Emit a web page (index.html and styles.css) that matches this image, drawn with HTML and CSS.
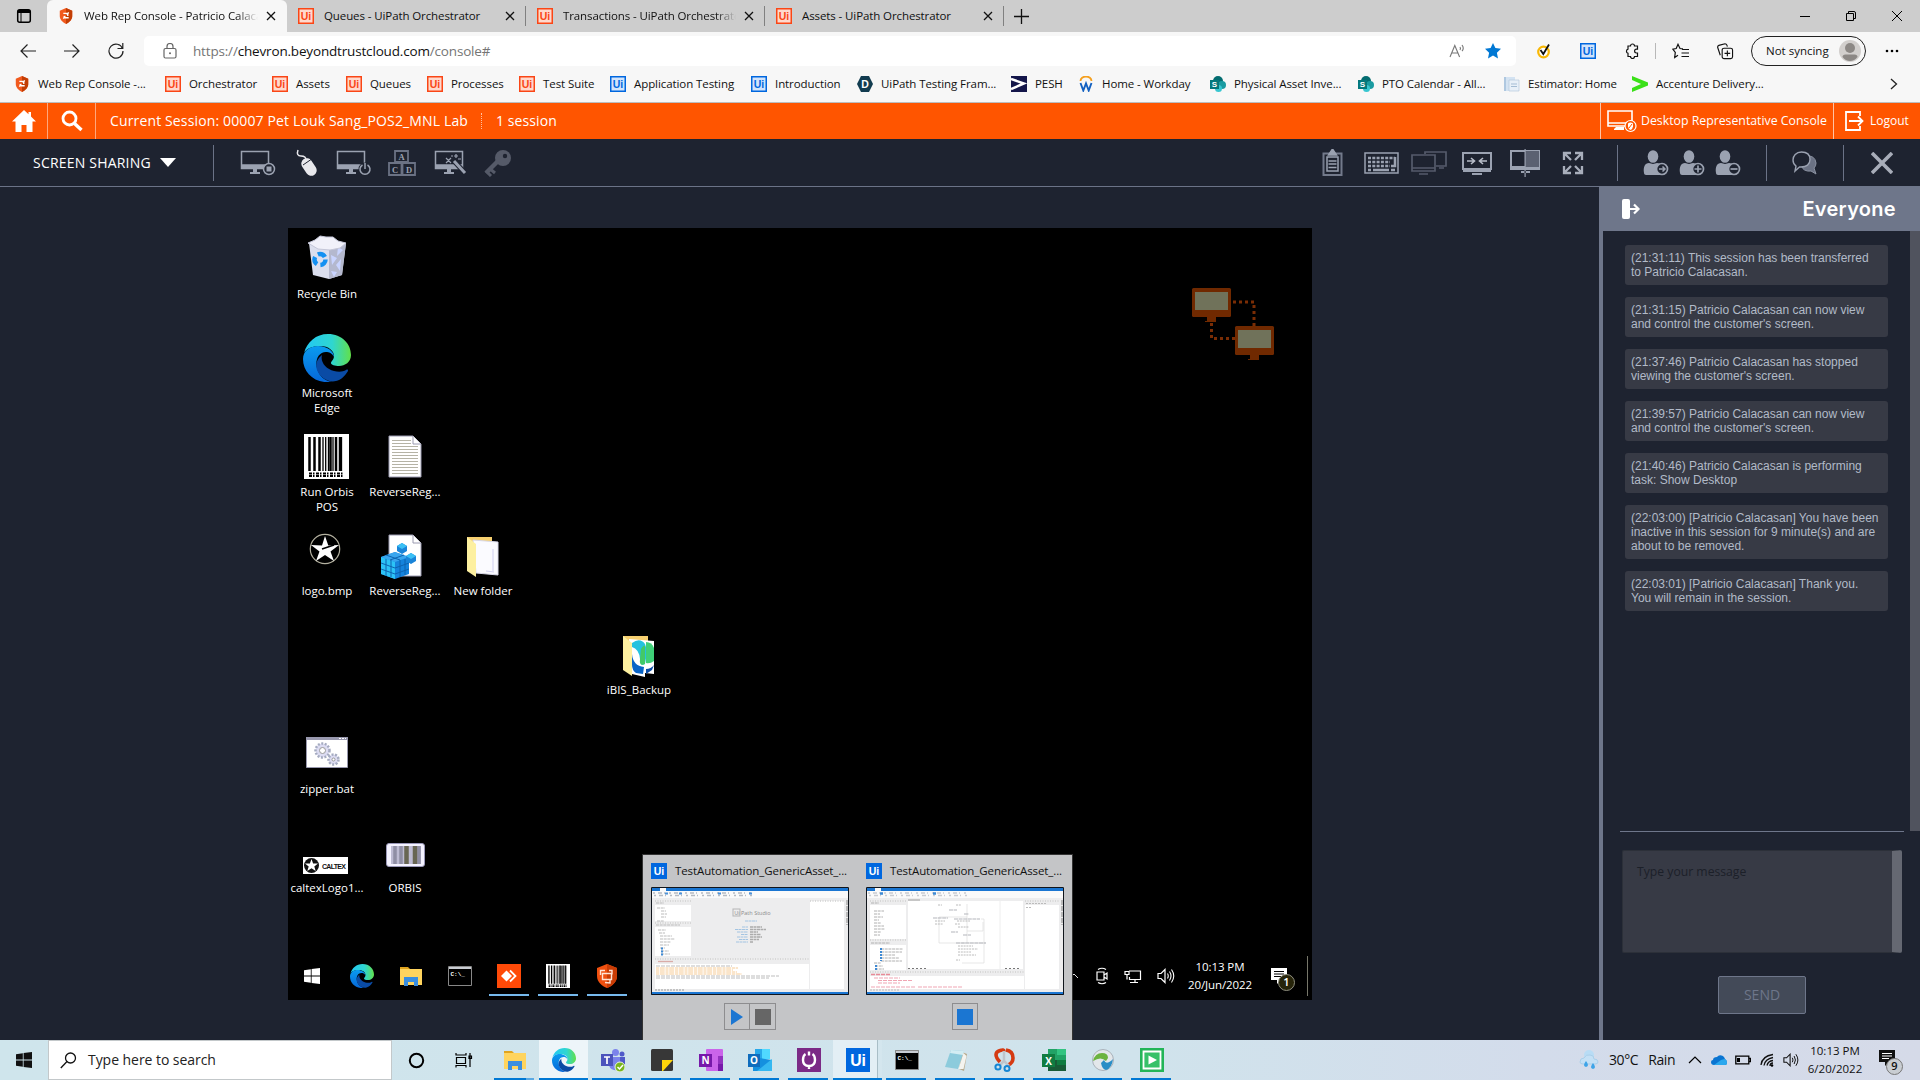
FILE: index.html
```html
<!DOCTYPE html>
<html lang="en">
<head>
<meta charset="utf-8">
<title>Web Rep Console</title>
<link rel="stylesheet" href="styles.css">
</head>
<body>
<svg class="paints" width="0" height="0">
  <defs>
    <linearGradient id="gTop" x1="0" y1="0" x2="1" y2="0"><stop offset="0" stop-color="#22c8f5"/><stop offset=".6" stop-color="#2fd6d0"/><stop offset="1" stop-color="#62e04a"/></linearGradient>
    <linearGradient id="gLeft" x1="0" y1="0" x2="0" y2="1"><stop offset="0" stop-color="#0a9bf0"/><stop offset="1" stop-color="#0667d8"/></linearGradient>
  </defs>
</svg>
<svg class="sprite">
  <symbol id="edge" viewBox="0 0 48 48">
    <path fill="url(#gTop)" d="M1 19C4 8 13 0 25 0c14 0 23 10 23 21 0 7-6 11-12 11-4 0-8-1-8-3s3-3 3-7c0-5-5-10-14-10C9 12 3 15 1 19z"/>
    <path fill="url(#gLeft)" d="M0 25c0-8 7-13 15-13 9 0 16 5 16 11-2-4-5-5-8-5-8 0-11 9-9 16 2 8 8 13 15 14C12 50 0 39 0 25z"/>
    <path fill="#0a4ba5" d="M19 21c-5 4-7 9-5 15 3 8 12 13 19 11 5-1 9-5 12-10 0-1 0-2-2-1-3 2-8 2-12 1-8-2-14-9-12-16z"/>
  </symbol>
  <symbol id="ui" viewBox="0 0 16 16"><rect x=".7" y=".7" width="14.6" height="14.6" fill="#ffd9cd" stroke="#fa4616" stroke-width="1.6"/><text x="8" y="12" text-anchor="middle" class="logo-text red">Ui</text></symbol>
  <symbol id="uib" viewBox="0 0 16 16"><rect x=".7" y=".7" width="14.6" height="14.6" fill="#d2e4fb" stroke="#0067df" stroke-width="1.6"/><text x="8" y="12" text-anchor="middle" class="logo-text blue">Ui</text></symbol>
  <symbol id="uis" viewBox="0 0 16 16"><rect width="16" height="16" fill="#0067df"/><text x="8" y="12" text-anchor="middle" class="logo-text white">Ui</text></symbol>
  <symbol id="shield" viewBox="0 0 16 18"><path fill="#f15a1e" d="M8 0l7 3v6c0 4-3 7-7 9-4-2-7-5-7-9V3z"/><path fill="#c23e05" d="M8 0l7 3v6c0 4-3 7-7 9z"/><path d="M5 6h5v3M11 11H6V9M5 12l2-3M11 5l-2 3" stroke="#fff" stroke-width="1.5" fill="none"/></symbol>
  <symbol id="x" viewBox="0 0 10 10"><path d="M1 1l8 8M9 1L1 9" stroke="currentColor" stroke-width="1.3"/></symbol>
  <symbol id="sp" viewBox="0 0 16 16"><circle cx="8" cy="5" r="5" fill="#036c70"/><circle cx="12" cy="9" r="4" fill="#1a9ba1"/><circle cx="8.500" cy="12.500" r="3.500" fill="#37c6d0"/><rect y="4" width="9" height="9" fill="#03787c"/><text x="4.500" y="11.200" text-anchor="middle" class="logo-s">S</text></symbol>
  <symbol id="mon" viewBox="0 0 36 28"><path d="M1.500 2.500h27v17h-27zM1.500 16h27" fill="none" stroke="currentColor" stroke-width="1.500"/><path d="M2 16h26v3H2zM13 20h4v3h3v2H10v-2h3z" fill="currentColor"/></symbol>
  <symbol id="person" viewBox="0 0 26 26"><ellipse cx="10" cy="6.500" rx="5.300" ry="6.300" fill="#9ba2b1"/><path d="M1 23c-1-6 1-10 5-10l4 1 4-1c4 0 5 3 5 8v4H3c-1 0-2-1-2-2z" fill="#9ba2b1"/><circle cx="19" cy="19" r="5.500" fill="#1e2330" stroke="#9ba2b1" stroke-width="1.700"/></symbol>
  <symbol id="folder" viewBox="0 0 24 24"><path fill="#e0a41f" d="M1 3h8l2 2H1z"/><path fill="#ffd45e" d="M1 5h22v16H1z"/><path fill="#3a8ee0" d="M5 13h14v9h-4v-4H9v4H5z"/></symbol>
  <symbol id="barcode" viewBox="0 0 45 45"><path fill="#fff" d="M0 0h45v45H0z"/><path d="M5.500 3v34M10.500 3v34M15.500 3v34M26.500 3v34M32 3v34M36 3v34" stroke="#000" stroke-width="2.500"/><path d="M19 3v34M21.700 3v34M24.500 3v34M29 3v34M37.500 3v34" stroke="#000" stroke-width="1.300"/><path d="M5 39.500h34M5 42h34" stroke="#000" stroke-width="2" stroke-dasharray="3 1 1.500 1.500"/></symbol>
  <symbol id="cmd" viewBox="0 0 24 20"><path fill="#000" stroke="#888" stroke-width="1" d="M.5.500h23v19H.5z"/><path fill="#c8ccd2" d="M1 1h22v2H1z"/><text x="2.500" y="9.500" class="cmd-text">C:\_</text></symbol>
  <symbol id="vol" viewBox="0 0 18 16"><path d="M1 5.500h3l4-4v13l-4-4H1z" fill="none" stroke="currentColor" stroke-width="1.200"/><path d="M10.500 5.500q1.500 2.500 0 5M12.500 3.500q3 4.500 0 9M14.500 1.500q4.500 6.500 0 13" fill="none" stroke="currentColor" stroke-width="1.100"/></symbol>
  <symbol id="note" viewBox="0 0 18 18"><path fill="currentColor" d="M1 1h16v12h-6l-4 4v-4H1z"/></symbol>
  <symbol id="win" viewBox="0 0 16 16"><path fill="currentColor" d="M0 2.200L6.800 1.200v6.300H0zM7.600 1.100L16 0v7.500H7.600zM0 8.400h6.800v6.400L0 13.800zM7.600 8.400H16V16l-8.400-1.100z"/></symbol>
</svg>

<header class="tabstrip">
  <div class="tab-menu"><svg width="16" height="16" viewBox="0 0 16 16"><rect x="1.700" y="1.700" width="12.600" height="12.600" rx="2" fill="none" stroke="#000" stroke-width="1.500"/><path d="M2 2h12v2H2z" fill="#000"/><path d="M5 2v12M2 4.500h12" stroke="#000"/></svg></div>
  <div class="tab tab-active"><svg class="fav"><use href="#shield"/></svg><span>Web Rep Console - Patricio Calacasan</span><svg class="close"><use href="#x"/></svg></div>
  <div class="tab"><svg class="fav"><use href="#ui"/></svg><span>Queues - UiPath Orchestrator</span><svg class="close"><use href="#x"/></svg></div>
  <div class="tab fade"><svg class="fav"><use href="#ui"/></svg><span>Transactions - UiPath Orchestrator</span><svg class="close"><use href="#x"/></svg></div>
  <div class="tab"><svg class="fav"><use href="#ui"/></svg><span>Assets - UiPath Orchestrator</span><svg class="close"><use href="#x"/></svg></div>
  <svg class="plus" viewBox="0 0 15 15"><path d="M7.500 0v15M0 7.500h15" stroke="#111" stroke-width="1.300"/></svg>
  <div class="winctl">
    <svg viewBox="0 0 12 12"><path d="M1 6.500h10" stroke="#000"/></svg>
    <svg viewBox="0 0 12 12"><path d="M1.500 3.500h7v7h-7z M3.500 3V1.500H9q1.500 0 1.500 1.500v5.500H9" fill="none" stroke="#000"/></svg>
    <svg viewBox="0 0 12 12"><path d="M1 1l10 10M11 1L1 11" stroke="#000"/></svg>
  </div>
</header>

<div class="navbar">
  <svg class="nav" viewBox="0 0 16 16"><path d="M16 8H1M7.500 1.500L1 8l6.500 6.500" fill="none" stroke="#222" stroke-width="1.200"/></svg>
  <svg class="nav" viewBox="0 0 16 16"><path d="M0 8h15M8.500 1.500L15 8l-6.500 6.500" fill="none" stroke="#222" stroke-width="1.200"/></svg>
  <svg class="nav" viewBox="0 0 16 16"><path d="M14.500 5.500A7 7 0 1 0 15 8M14.800 0v5.500H9.500" fill="none" stroke="#222" stroke-width="1.200"/></svg>
  <div class="address">
    <svg class="lock" viewBox="0 0 14 16"><rect x="1" y="5.500" width="12" height="9.500" rx="1.500" fill="none" stroke="#666" stroke-width="1.200"/><path d="M4 5.500V3.500a3 3 0 0 1 6 0v2" fill="none" stroke="#666" stroke-width="1.200"/><circle cx="7" cy="10.300" r="1" fill="#666"/></svg>
    <span class="url"><i>https://</i>chevron.beyondtrustcloud.com<i>/console#</i></span>
    <svg class="read" viewBox="0 0 18 16"><path d="M1 14L5.800 2.500 10.600 14M2.700 10h6.200M11 4q1 1.500 0 3M13 2q2.500 3.500 0 6" fill="none" stroke="#777" stroke-width="1.100"/></svg>
    <svg class="star" viewBox="0 0 16 16"><path fill="#0078d4" d="M8 0l2.400 5.100 5.600.7-4.100 3.900L13 15.400 8 12.600 3 15.400l1.100-5.700L0 5.800l5.600-.7z"/></svg>
  </div>
  <div class="ext">
    <svg viewBox="0 0 16 16"><circle cx="7.500" cy="9" r="5.300" fill="#fff" stroke="#f9b806" stroke-width="2.200"/><path d="M4.500 7l2.800 4L13 1.500" fill="none" stroke="#111" stroke-width="1.800"/></svg>
    <svg viewBox="0 0 16 16"><use href="#uib"/></svg>
    <svg viewBox="0 0 16 16"><path d="M4 3h2.500a2 2 0 0 1 4 0H13.500v3.200h-1a1.800 1.800 0 0 0 0 3.800h1V13.500h-3a2 2 0 0 1-4 0H4v-3.200a2.200 2.200 0 0 1 0-4.200z" fill="none" stroke="#111" stroke-width="1.200"/></svg>
  </div>
  <div class="ext ext2">
    <svg viewBox="0 0 18 16"><path d="M11 5.300L8 5 6 .8 4.200 5 .8 5.600l2.500 3.300L2.700 14 6 11.800M10 6h7M9.500 9.500H17M9.500 13H17" fill="none" stroke="#111" stroke-width="1.200"/></svg>
    <svg viewBox="0 0 18 18"><rect x="6" y="5.500" width="11" height="11" rx="2" fill="none" stroke="#111" stroke-width="1.200"/><path d="M11.500 8v6M8.500 11h6M4 13L1.200 4.500Q1 3 2.500 2.500L9 .8q1.500 0 2 1.500l.5 1.500" fill="none" stroke="#111" stroke-width="1.200"/></svg>
  </div>
  <div class="profile"><span>Not syncing</span><svg viewBox="0 0 22 22"><circle cx="11" cy="11" r="11" fill="#d2cfcd"/><circle cx="11" cy="8" r="5" fill="#8c8885"/><path d="M3.500 17q0-2.500 3-2.500h9q3 0 3 2.500-3 4-7.500 4t-7.500-4z" fill="#8c8885"/></svg></div>
  <svg class="dots" viewBox="0 0 14 4"><circle cx="2" cy="2" r="1.300"/><circle cx="7" cy="2" r="1.300"/><circle cx="12" cy="2" r="1.300"/></svg>
</div>

<nav class="bookmarks">
  <a><svg><use href="#shield"/></svg>Web Rep Console -...</a>
  <a><svg><use href="#ui"/></svg>Orchestrator</a>
  <a><svg><use href="#ui"/></svg>Assets</a>
  <a><svg><use href="#ui"/></svg>Queues</a>
  <a><svg><use href="#ui"/></svg>Processes</a>
  <a><svg><use href="#ui"/></svg>Test Suite</a>
  <a><svg><use href="#uib"/></svg>Application Testing</a>
  <a><svg><use href="#uib"/></svg>Introduction</a>
  <a><svg viewBox="0 0 16 16"><path fill="#123c50" d="M4 0h8l4 8-4 8H4L0 8z"/><text x="8" y="12" text-anchor="middle" class="logo-text white">D</text></svg>UiPath Testing Fram...</a>
  <a><svg viewBox="0 0 16 16"><path fill="#14164a" d="M0 0h16v16H0z"/><path d="M0 3l13 4.500L0 13" fill="none" stroke="#fff" stroke-width="2.500"/></svg>PESH</a>
  <a><svg viewBox="0 0 16 16"><path d="M2.500 5a5.500 4.500 0 0 1 11 0" fill="none" stroke="#f5a01f" stroke-width="1.800"/><path d="M2.500 7l2.800 7.500L8 7.500l2.700 7L13.500 7" fill="none" stroke="#1260c0" stroke-width="1.900"/></svg>Home - Workday</a>
  <a><svg><use href="#sp"/></svg>Physical Asset Inve...</a>
  <a><svg><use href="#sp"/></svg>PTO Calendar - All...</a>
  <a><svg viewBox="0 0 16 16"><path d="M2 1h9v14H2z" fill="#d4e3f2"/><path d="M5 4h10v11H5z" fill="#e8f0f8" stroke="#b5c8dc" stroke-width=".7"/><path d="M7 8h6M7 10.500h6" stroke="#a5bdd4"/><path d="M1 1v14" stroke="#7fa8d0" stroke-width="1.200"/></svg>Estimator: Home</a>
  <a><svg viewBox="0 0 16 16"><path d="M0 0l16 6.500v3L0 16v-4l9-4-9-4z" fill="#3be019"/></svg>Accenture Delivery...</a>
  <svg class="more" viewBox="0 0 8 12"><path d="M1 1l5.500 5L1 11" fill="none" stroke="#222" stroke-width="1.300"/></svg>
</nav>

<div class="session">
  <div class="cell"><svg width="24" height="22" viewBox="0 0 24 22"><path fill="#fff" d="M12 0L0 11.500h3.500V22h6v-7h5v7h6V11.500H24L19 6.500V2h-2.500v2.200z"/></svg></div>
  <div class="cell"><svg width="22" height="22" viewBox="0 0 22 22"><circle cx="8.500" cy="8.500" r="6.500" fill="none" stroke="#fff" stroke-width="2.800"/><path d="M13.500 13.500L20.500 20" stroke="#fff" stroke-width="3.400"/></svg></div>
  <span class="current">Current Session: 00007 Pet Louk Sang_POS2_MNL Lab</span>
  <span class="count">1 session</span>
  <div class="desk"><svg width="30" height="24" viewBox="0 0 30 24"><path d="M1 2h24v15H1zM1 14h24" fill="none" stroke="#fff" stroke-width="1.600"/><path d="M9 18h8v3H7v-1z" fill="#fff"/><circle cx="23.500" cy="17" r="5.500" fill="#ff5500" stroke="#fff" stroke-width="1.200"/><path d="M21 14.500q2.500-2 5 0v3q-.5 3-2.500 3.500-2-.5-2.500-3.500z" fill="#fff"/><path d="M22 19l3-4" stroke="#ff5500"/></svg><span>Desktop Representative Console</span></div>
  <div class="logout"><svg width="19" height="20" viewBox="0 0 19 20"><path d="M15 5V1H1v18h14v-4M4 10h13M13 5.500l4.500 4.500-4.500 4.500" fill="none" stroke="#fff" stroke-width="1.800"/></svg><span>Logout</span></div>
</div>

<div class="tools">
  <div class="mode">SCREEN SHARING<svg width="16" height="9" viewBox="0 0 16 9"><path fill="#fff" d="M0 0h16L8 9z"/></svg></div>
  <div class="group">
    <svg class="t"><use href="#mon"/><circle cx="29" cy="20" r="5.500" fill="#1e2330" stroke="#9ba2b1" stroke-width="1.500"/><path d="M26.500 17.500h5v5h-5z" fill="#9ba2b1"/></svg>
    <svg class="t" viewBox="-2 0 36 28"><path d="M8 1q-2 6 3 6t5 4" fill="none" stroke="#e8e8ec" stroke-width="1.500"/><rect x="13.500" y="8.500" width="11" height="19" rx="5.500" transform="rotate(-33 19 18)" fill="#e8e8ec"/><path d="M13 16l8-5.500" stroke="#1e2330"/></svg>
    <svg class="t"><use href="#mon"/><circle cx="29" cy="20" r="6.500" fill="#1e2330"/><path d="M26.500 16a5 5 0 1 0 5 0M29 14v6" fill="none" stroke="#9ba2b1" stroke-width="1.500"/></svg>
    <svg class="t block" viewBox="0 0 36 28"><path d="M11 2h13v11H11zM5 14h12.500v12H5zM18.500 14H31v12H18.500z" fill="none" stroke="#6b7284" stroke-width="1.800"/><text x="17.500" y="11">A</text><text x="11" y="23.500">C</text><text x="25" y="23.500">D</text></svg>
    <svg class="t" viewBox="-2 0 36 28"><use href="#mon" width="36" height="28"/><path d="M20 12l11 12" stroke="#1e2330" stroke-width="5"/><path d="M20 12l11 12" stroke="#9ba2b1" stroke-width="3"/><path d="M12 9l5 5M17 9l-5 5M22 5v4M20 7h4M17 7h2M24 10h3" stroke="#9ba2b1" stroke-width="1.200"/></svg>
    <svg class="t" viewBox="0 0 36 28"><circle cx="23" cy="9" r="8" fill="#555a68"/><path d="M18 12L6 24" stroke="#555a68" stroke-width="4.500"/><path d="M9 19l6 5M6 22l5 5" stroke="#555a68" stroke-width="3"/><circle cx="25" cy="7" r="2.200" fill="#1e2330"/></svg>
  </div>
  <div class="group right">
    <svg class="t" viewBox="0 0 36 28"><path d="M8.500 4.500h18V26h-18z" fill="none" stroke="#737a8b" stroke-width="2"/><path d="M12 8h11v14H12z" fill="none" stroke="#9ba2b1" stroke-width="1.500"/><path d="M17.500 0l4 6h-8zM13.500 12h8M13.500 15h8M13.500 18.500h8" fill="#9ba2b1" stroke="#9ba2b1" stroke-width="1.500"/></svg>
    <svg class="t" viewBox="0 0 36 28"><path d="M2 4h33v20H2z" fill="none" stroke="#9ba2b1" stroke-width="1.500"/><path d="M5 9h27M5 13h22M5 17h22" stroke="#9ba2b1" stroke-width="2.700" stroke-dasharray="3 1.300"/><path d="M28 17h4V8M5 21h3M10 21h16M28 21h4" stroke="#9ba2b1" stroke-width="2.500" fill="none"/></svg>
    <svg class="t" viewBox="0 0 36 28"><path d="M14 5V3h21v14H25M1 6h23v16H1zM1 19h23M8 25h9M28 19h5" fill="none" stroke="#555b6b" stroke-width="1.700"/></svg>
    <svg class="t" viewBox="0 0 36 28"><path d="M4 4h28v16H4z" fill="none" stroke="#9ba2b1" stroke-width="2"/><path d="M4 20h28v3H4zM13 26h10v-2H13z" fill="#9ba2b1"/><path d="M8 12h7M12 9l3.500 3-3.500 3M28 12h-7M24 9l-3.500 3 3.500 3" stroke="#b8bdc8" stroke-width="1.600" fill="none"/></svg>
    <svg class="t" viewBox="0 0 36 28"><path d="M4 2h28v16H4z" fill="none" stroke="#9ba2b1" stroke-width="2"/><path d="M18 2h14v16H18z" fill="#5b6171"/><path d="M3 18h30v3H3zM14 24h9v-2h-9zM17.500 0h1.200v28h-1.200z" fill="#9ba2b1"/></svg>
    <svg class="t" viewBox="0 0 36 28"><path d="M9 11V4h7M9 4l7 7M27 11V4h-7M27 4l-7 7M9 17v7h7M9 24l7-7M27 17v7h-7M27 24l-7-7" fill="none" stroke="#a8aebb" stroke-width="2.300"/></svg>
  </div>
  <div class="people">
    <svg><use href="#person"/><path d="M16 19h6M19.500 16.500l2.500 2.500-2.500 2.500" fill="none" stroke="#9ba2b1" stroke-width="1.500"/></svg>
    <svg><use href="#person"/><path d="M15.500 19h7M19 15.500v7" stroke="#9ba2b1" stroke-width="1.700"/></svg>
    <svg><use href="#person"/><path d="M15.500 19h7" stroke="#9ba2b1" stroke-width="1.700"/></svg>
  </div>
  <div class="chat-btn"><svg width="26" height="24" viewBox="0 0 26 24"><path d="M14 5q9-1 10 7 0 3-2 5l2 6-5-3q-8 1-10-6" fill="#6b7284" stroke="#8b92a2"/><path d="M9.500 1C4 1 1 5 1 9q0 4 3 6l-1 5 4.500-4C15 16.500 18 13 18 8.500 18 4 15 1 9.500 1z" fill="#1e2330" stroke="#9ba2b1" stroke-width="1.400"/></svg></div>
  <div class="end-btn"><svg width="22" height="22" viewBox="0 0 22 22"><path d="M1 1l20 20M21 1L1 21" stroke="#a8adb9" stroke-width="3.600"/></svg></div>
</div>

<main class="work">
  <section class="stage">
    <div class="remote">
      <svg class="mark" width="86" height="76" viewBox="0 0 86 76"><path d="M43 16h21v24M21.500 37v15.500h24" fill="none" stroke="#7a2d05" stroke-width="3" stroke-dasharray="3 3"/><rect x="2" y="2" width="39" height="29" rx="1.500" fill="#702900"/><path d="M17 31h9v5H15v-1h2zM60 69h9v5H58v-1h2z" fill="#702900"/><rect x="5" y="6" width="33" height="18" fill="#70725a"/><rect x="45" y="40" width="39" height="29" rx="1.500" fill="#702900"/><rect x="48" y="44" width="33" height="18" fill="#70725a"/></svg>

      <div class="icon c1 r1"><svg viewBox="0 0 48 48"><path d="M6 8h37l-4 32-13 4-16-4z" fill="#dcdfee"/><path d="M26 13l17-5-4 32-13 4z" fill="#b4b8ce"/><path d="M28 20l6 3-5 7zM33 30l5-6-1 12zM28 36l6 1-3 5zM35 12l5 3-6 6z" fill="#c9d4ff"/><path d="M5 8l7-3 5-4 6 1 7 0 5 4 8 2-6 5-10 2-12-1z" fill="#f1f1fa" stroke="#c4c6d8"/><circle cx="17" cy="24.500" r="5.500" fill="none" stroke="#1490f2" stroke-width="4.500" stroke-dasharray="8 3.500"/></svg><span>Recycle Bin</span></div>
      <div class="icon c1 r2"><svg><use href="#edge"/></svg><span>Microsoft<br>Edge</span></div>
      <div class="icon c1 r3"><svg viewBox="0 0 48 48"><use href="#barcode" x="1" y="1" width="45" height="45"/></svg><span>Run Orbis<br>POS</span></div>
      <div class="icon c2 r3"><svg viewBox="0 0 48 48"><path d="M8 3h24l8 8v33H8z" fill="#fff" stroke="#9a9ab0"/><path d="M32 3v8h8" fill="#fff" stroke="#9a9ab0"/><path d="M11 7.500h19M11 10.500h19M11 13.500h26M11 16.500h26M11 19.500h26M11 22.500h26M11 25.500h26M11 28.500h26M11 31.500h26M11 34.500h26M11 37.500h26M11 40.500h26" stroke="#b5b3a5"/></svg><span>ReverseReg...</span></div>
      <div class="icon c1 r4"><svg viewBox="0 0 48 48"><circle cx="22" cy="17" r="14.700" fill="#000" stroke="#b4b1a0" stroke-width="1.200"/><path d="M22 4l3.300 9.500L36 13l-8.500 6.500L31 29l-9-6-9 6 3.500-9.500L8 13l11 .5z" fill="#fff"/><path d="M19 17l12-4" stroke="#000" stroke-width="1.500"/></svg><span>logo.bmp</span></div>
      <div class="icon c2 r4"><svg viewBox="0 0 48 48"><path d="M8 3h24l8 8v33H8z" fill="#fff" stroke="#9a9ab0"/><path d="M32 3v8h8" fill="#fff" stroke="#9a9ab0"/><path d="M0 25l14-5 14 5v17l-14 5-14-5z" fill="#1583dc"/><path d="M0 25l14-5 14 5-14 5z" fill="#38a5ee"/><path d="M0 25l14 5v17L0 42z" fill="#2cc3f6"/><path d="M5 27v17M10 28v17M0 31l14 5 14-5M0 37l14 5 14-5M19 28v17M24 27v16M5 23l14 5M23 23L9 28" stroke="#0d63b0" fill="none"/><path d="M16 14l5-3 5 3v5l-5 3-5-3zM25 24l5-3 5 3v5l-5 3-5-3z" fill="#1a84d8"/><path d="M16 14l5-3 5 3-5 3zM25 24l5-3 5 3-5 3z" fill="#3bc0f5"/></svg><span>ReverseReg...</span></div>
      <div class="icon c3 r4"><svg viewBox="0 0 48 48"><path d="M8 5h25v34H8z" fill="#f7d070"/><path d="M14 8l25 2v33l-22-2z" fill="#fbfbff" stroke="#d8d8e8"/><path d="M34 17v22M27 39l8 1" stroke="#cfcff0"/><path d="M8 5l9 7v33l-9-6z" fill="#fdf0a0"/></svg><span>New folder</span></div>
      <div class="icon c4 r5"><svg viewBox="0 0 48 48"><path d="M8 5h25v34H8z" fill="#f7d070"/><path d="M14 8l25 2v33l-9-1v4l-13-3z" fill="#fff"/><path d="M17 12q8-6 13 1 3 6 0 20-5 3-5-5-1-10-8-12z" fill="#25c2df"/><path d="M26 18q3-5 4-3v18q-6 3-5-5z" fill="#43c967"/><path d="M31 11q6 0 8 6v13q-4 3-8 2z" fill="#3fd078"/><path d="M17 23q1 12 12 13l-1 7-7-1q-4-3-4-8z" fill="#0964c6"/><path d="M31 38q5 0 8-4l-2 5-6 4z" fill="#0a4ba5"/><path d="M8 5l9 7v33l-9-6z" fill="#fdf0a0"/></svg><span>iBIS_Backup</span></div>
      <div class="icon c1 r6"><svg viewBox="0 0 48 48"><path d="M3.500 7.500h41v30h-41z" fill="#fff" stroke="#9898ae"/><path d="M3 7h42v3H3z" fill="#9898ae"/><path d="M36 8.500h7" stroke="#fff" stroke-dasharray="2 1"/><circle cx="19.500" cy="20.500" r="7" fill="#dcdcf2" stroke="#a5abc0" stroke-width="2.500" stroke-dasharray="2 1.500"/><circle cx="19.500" cy="20.500" r="3" fill="#fff" stroke="#999"/><circle cx="30.500" cy="29.500" r="5" fill="#dcdcf2" stroke="#a5abc0" stroke-width="2.500" stroke-dasharray="2 1.500"/><circle cx="30.500" cy="29.500" r="1.500" fill="#fff" stroke="#999"/></svg><span>zipper.bat</span></div>
      <div class="icon c1 r7"><svg viewBox="0 0 48 48"><path d="M0 28h45v17H0z" fill="#fff"/><circle cx="8.500" cy="36.500" r="7.500" fill="#111"/><path d="M8.500 30l1.600 4.500H15L11.300 37.500l1.400 4.500-4.200-2.700L4.300 42l1.400-4.500L2 34.500h4.900z" fill="#fff"/><text x="31" y="39.500" text-anchor="middle" textLength="24" class="caltex">CALTEX</text></svg><span>caltexLogo1...</span></div>
      <div class="icon c2 r7"><svg viewBox="0 0 48 48"><rect x="5.500" y="14.500" width="38" height="23" rx="2.500" fill="#f4f2ff" stroke="#9a98b8"/><path d="M10 17h30v18H10z" fill="#bdbbd2"/><path d="M14 17v18M20 17v18M38 17v18" stroke="#8f8ea4" stroke-width="3.500"/><path d="M25.500 17v18M34 17v18" stroke="#686653" stroke-width="4.500"/></svg><span>ORBIS</span></div>

      <div class="rbar">
        <div class="rb"><svg width="16" height="16"><use href="#win"/></svg></div>
        <div class="rb"><svg><use href="#edge"/></svg></div>
        <div class="rb"><svg><use href="#folder"/></svg></div>
        <div class="rb"><svg width="24" height="20"><use href="#cmd"/></svg></div>
        <div class="rb on"><svg viewBox="0 0 24 24"><path fill="#ff4a08" d="M0 0h24v24H0z"/><path d="M4 12l5.500-5.500L15 12l-5.500 5.500z" fill="#fff"/><path d="M13 6.500l5.500 5.500-5.500 5.500" fill="none" stroke="#fff" stroke-width="1.800"/></svg></div>
        <div class="rb on"><svg><use href="#barcode"/></svg></div>
        <div class="rb on"><svg viewBox="0 0 24 24"><path fill="#f0500f" d="M12 0l10 4v8c0 6-5 10-10 12C7 22 2 18 2 12V4z"/><path fill="#c83c05" d="M12 0l10 4v8c0 6-5 10-10 12z"/><path d="M7.500 9.500h9v6h-9zM5.500 11V6.500H10M14 6.500h3v4M10 18.500l5 .5v-3" stroke="#ffe3d5" stroke-width="1.400" fill="none"/></svg></div>
        <div class="rtray">
          <svg width="9" height="6" viewBox="0 0 9 6"><path d="M0 5l4-4 4 4" stroke="#ddd" fill="none"/></svg>
          <svg width="14" height="18" viewBox="0 0 14 18"><path d="M2 5h7v8H2zM9 8l3-2v6l-3-2M3 2.500q4-2.500 8 0M3 15.500q4 2.500 8 0" fill="none" stroke="#fff" stroke-width="1.200"/></svg>
          <svg width="18" height="15" viewBox="0 0 18 15"><path d="M5 2h11.500v8.500H5.500V8M1 2.500h4v3H1zM3 6v4.500M11 11v2.500M6 13.500h8" fill="none" stroke="#fff" stroke-width="1.200"/></svg>
          <svg width="18" height="16"><use href="#vol"/></svg>
          <div class="rclock">10:13 PM<br>20/Jun/2022</div>
          <div class="rnote"><svg width="18" height="18"><use href="#note"/><path d="M4 4.500h10M4 7h10M4 9.500h7" stroke="#000"/></svg><b>1</b></div>
        </div>
      </div>
    </div>
  </section>

  <aside class="chat">
    <div class="chat-head"><svg width="20" height="22" viewBox="0 0 20 22"><rect x="1" y="1" width="8" height="20" rx="2" fill="#fff"/><path d="M8 11h9M13 6.500l4.500 4.500-4.500 4.500" fill="none" stroke="#fff" stroke-width="2.200"/></svg><span>Everyone</span></div>
    <div class="chat-log">
      <div class="msgs">
        <p>(21:31:11) This session has been transferred<br>to Patricio Calacasan.</p>
        <p>(21:31:15) Patricio Calacasan can now view<br>and control the customer's screen.</p>
        <p>(21:37:46) Patricio Calacasan has stopped<br>viewing the customer's screen.</p>
        <p>(21:39:57) Patricio Calacasan can now view<br>and control the customer's screen.</p>
        <p>(21:40:46) Patricio Calacasan is performing<br>task: Show Desktop</p>
        <p>(22:03:00) [Patricio Calacasan] You have been<br>inactive in this session for 9 minute(s) and are<br>about to be removed.</p>
        <p>(22:03:01) [Patricio Calacasan] Thank you.<br>You will remain in the session.</p>
      </div>
      <div class="scroll"></div>
    </div>
    <div class="compose">
      <div class="input"><span>Type your message</span></div>
      <button class="send">SEND</button>
    </div>
  </aside>
</main>

<div class="preview">
  <div class="pv">
    <div class="pv-title"><svg><use href="#uis"/></svg><span>TestAutomation_GenericAsset_...</span></div>
    <svg class="thumb" viewBox="0 0 198 108">
      <path fill="#ededee" d="M0 0h198v108H0z"/><path fill="#1b76d2" d="M0 1h198v3H0zM0 105h198v3H0z"/><path fill="#fafafa" d="M0 4h198v7H0zM9 1h6v3H9z"/>
      <path fill="#fff" d="M4 18h36v16H4zM4 40h36v29H4zM159 14h34v88h-34zM4 77h154v25H4z"/>
      <path d="M2 6h100M3 8.500h98" stroke="#b5bac2" stroke-width="1.300" stroke-dasharray="2 3 4 2 1 4"/><path d="M14 6.500h3M28 6.500h3M67 6.500h3M98 6.500h3" stroke="#4f92d6" stroke-width="2"/>
      <path d="M4 14h36M4 36h36M4 72h154M159 14h34" stroke="#d0d0d0" stroke-width="1.300" stroke-dasharray="1 1.500"/>
      <path d="M5 16h8M5 38h24M6 21h8M10 24h5M10 27h6M10 30h5M6 34h7M7 43h8M8 46h6M9 49h12M9 52h15M9 55h11M9 58h9M9 61h5M10 64h8M10 67h9" stroke="#bbb" stroke-dasharray="3 .7"/>
      <path d="M10 61.500h2M10 64.500h2M10 67.500h2" stroke="#3f8ad4" stroke-width="2"/>
      <text x="90" y="27.500" class="pv-logo">Path Studio</text><rect x="82" y="22" width="7" height="7" fill="none" stroke="#b5b5b5"/><text x="83.300" y="27.700" class="pv-logo">Ui</text>
      <path d="M94 34h12M91 40h6M84 42.500h13M86 45h11M90 47.500h7M86 50h11M88 52.500h9M85 55h12" stroke="#a3c4e2" stroke-dasharray="3 .5"/>
      <path d="M99 40h12M99 42.500h16M99 45h8M99 47.500h11M99 50h12M99 52.500h9M99 55h3" stroke="#ababab" stroke-width="1.300" stroke-dasharray="3 .5"/>
      <path d="M7 74.500h15" stroke="#d9aca8" stroke-width="1.300"/><path d="M5 79h76M5 89h123M5 91h113" stroke="#bdbdbd" stroke-dasharray="4 1"/>
      <path d="M5 81h82M5 83h77M5 85h81M5 87h86" stroke="#f6cb95" stroke-dasharray="3 .7 5 .8"/><path d="M4 103h30" stroke="#999" stroke-dasharray="2 1"/><path d="M196 13v25" stroke="#bbb" stroke-width="2" stroke-dasharray="5 1"/><path d="M.5.500h197v107H.5z" fill="none" stroke="#10151c"/>
    </svg>
    <div class="pv-btns"><i><svg viewBox="0 0 12 16"><path d="M0 0l12 8-12 8z" fill="#1b76d2"/></svg></i><i><svg viewBox="0 0 16 16"><path d="M0 0h16v16H0z" fill="#666"/></svg></i></div>
  </div>
  <div class="pv">
    <div class="pv-title"><svg><use href="#uis"/></svg><span>TestAutomation_GenericAsset_...</span></div>
    <svg class="thumb" viewBox="0 0 198 108">
      <path fill="#ededee" d="M0 0h198v108H0z"/><path fill="#1b76d2" d="M0 1h198v3H0zM0 105h198v3H0z"/><path fill="#fafafa" d="M0 4h198v7H0zM9 1h6v3H9z"/>
      <path fill="#fff" d="M4 18h36v34H4zM4 58h36v25H4zM42 14h115v68H42zM159 18h34v84h-34zM4 89h154v13H4z"/>
      <path d="M2 6h100M3 8.500h98" stroke="#c9ccd1" stroke-width="1.300" stroke-dasharray="2 3 4 2 1 4"/><path d="M14 6.500h3M67 6.500h3" stroke="#3f8ad4" stroke-width="2.500"/><path d="M42 13h12" stroke="#b8b8b8" stroke-width="1.500"/>
      <path d="M4 14h36M4 53h36M4 85h154M159 14h34" stroke="#d0d0d0" stroke-width="1.300" stroke-dasharray="1 1.500"/>
      <path d="M5 16h8M5 56h19M8 24h10M8 27h6M8 30h9M8 33h5M8 36h7M8 39h10M8 42h11M8 45h7M8 48h6M15 62h22M15 65h21M15 68h14M15 71h18M15 74h21M8 76h7M9 79h8M9 82h9" stroke="#b0b0b0" stroke-dasharray="3 .7"/>
      <path d="M15 61v13M9 79h3M9 82h3" stroke="#3f8ad4" stroke-width="2" stroke-dasharray="2 1"/>
      <path d="M101 17v13H73v26h26M101 30v14h16V35M101 44v12M115 32h3v44H96M96 56h24" fill="none" stroke="#dcdcdc" stroke-width=".7"/>
      <path d="M67 31h15M88 32h26M83 23h8M98 27h5M97 48h8M90 56h30M85 45h7" stroke="#b3b5bb" stroke-width="1.200" stroke-dasharray="4 .6"/><path d="M69 34h10M69 37h8M91 34h13M89 37h5M92 40h11M92 59h15M92 62h20M92 65h13M92 68h18M90 73h4M72 18h4M90 18h5" stroke="#bcbcbc" stroke-dasharray="2 .8"/><path d="M134 14v68" stroke="#eee"/><path d="M42 81.500h18M139 81.500h16" stroke="#777" stroke-dasharray="2 2"/>
      <path d="M5 87.500h20" stroke="#e88a96" stroke-width="1.500" stroke-dasharray="4 1"/><path d="M8 91h26M12 93.500h35M12 96h22M5 100h44M52 100h45" stroke="#f0a5b3" stroke-width="1.100" stroke-dasharray="4 1"/>
      <path d="M160 16.500h20M160 20.500h5M4 103h30" stroke="#bbb" stroke-dasharray="2 1"/><path d="M196 13v25" stroke="#bbb" stroke-width="2" stroke-dasharray="5 1"/><path d="M.5.500h197v107H.5z" fill="none" stroke="#10151c"/>
    </svg>
    <div class="pv-btns"><i><svg viewBox="0 0 16 16"><path d="M0 0h16v16H0z" fill="#1b76d2"/></svg></i></div>
  </div>
</div>

<footer class="taskbar">
  <div class="start"><svg width="16" height="16"><use href="#win"/></svg></div>
  <div class="search"><svg width="17" height="17" viewBox="0 0 17 17"><circle cx="10.500" cy="6" r="5" fill="none" stroke="#111" stroke-width="1.300"/><path d="M7 9.500L.8 16" stroke="#111" stroke-width="1.300"/></svg><span>Type here to search</span></div>
  <div class="sys"><svg width="17" height="17" viewBox="0 0 17 17"><circle cx="8.500" cy="8.500" r="6.700" fill="none" stroke="#000" stroke-width="2"/></svg></div>
  <div class="sys"><svg width="18" height="16" viewBox="0 0 18 16"><path d="M1 1v2h10V1M1.500 5.500h9v6h-9zM1 15.500v-2h10v2M15 1v14M14 4h2.500v2.500H14z" fill="none" stroke="#000" stroke-width="1.200"/></svg></div>
  <div class="apps">
    <div class="app split"><svg><use href="#folder"/></svg></div>
    <div class="app active"><svg><use href="#edge"/></svg></div>
    <div class="app"><svg viewBox="0 0 24 24"><circle cx="14.500" cy="4.500" r="3.500" fill="#7b83eb"/><circle cx="21" cy="6" r="2.500" fill="#5059c9"/><path d="M8 9h11v9q-2 5-6 4-5-1-5-6z" fill="#7b83eb"/><path d="M19 9h5v7q-1 3-5 2z" fill="#5059c9"/><path d="M0 6h12v12H0z" fill="#4b53bc"/><path d="M3 9h6M6 9v7" stroke="#fff" stroke-width="1.700"/><circle cx="19" cy="19" r="5" fill="#79b51c" stroke="#e9f2e0"/><path d="M16.500 19l2 2 3.500-4" stroke="#fff" stroke-width="1.500" fill="none"/></svg></div>
    <div class="app"><svg viewBox="0 0 24 24"><rect x="1" y="1" width="22" height="22" rx="1.500" fill="#373737"/><path d="M12 12h11l-10 11h-1z" fill="#ffd60a"/></svg></div>
    <div class="app"><svg viewBox="0 0 24 24"><rect x="7" y="1" width="17" height="22" rx="1" fill="#ca64ea"/><path d="M19 8h5v8h-5z" fill="#9332bf"/><path d="M19 16h5v7h-5z" fill="#7719aa"/><path d="M0 6h13v13H0z" fill="#7719aa"/><text x="6.500" y="16" text-anchor="middle" class="ms">N</text></svg></div>
    <div class="app"><svg viewBox="0 0 24 24"><path d="M7 1h15v10H7z" fill="#28a8ea"/><path d="M14 1h8v10h-8z" fill="#50d9ff"/><path d="M5 9l19 3v11H5z" fill="#1490df"/><path d="M24 11L9 23h15z" fill="#35b8f1"/><path d="M0 6h12v13H0z" fill="#0f6cbd"/><text x="6" y="16" text-anchor="middle" class="ms">O</text></svg></div>
    <div class="app"><svg viewBox="0 0 24 24"><path fill="#7b2a86" d="M0 0h24v24H0z"/><path d="M8.500 6Q6 7.500 6 12q0 6 6 6t6-6q0-4.500-2.500-6M12 3.500v4M12 17v4" fill="none" stroke="#fff" stroke-width="2.400"/></svg></div>
    <div class="app active last"><svg><use href="#uis"/></svg></div>
    <div class="app"><svg width="24" height="20"><use href="#cmd"/></svg></div>
    <div class="app"><svg viewBox="0 0 24 24"><path d="M18 4l5 2-3 17-5-2z" fill="#b7a98c"/><path d="M7 2l13 1-6 18-13-2z" fill="#8ccbdc"/><path d="M7 2l13 1-1 4-13-2z" fill="#d2edf3"/><path d="M14.500 21l5-16 3 3-3 13z" fill="#f4f4ef"/></svg></div>
    <div class="app"><svg viewBox="0 0 24 24"><path d="M7 14Q-1 5 7 2.500q4-1.500 4 1M13 2q7 1 7 8 0 5-5 7" fill="none" stroke="#d53a12" stroke-width="3.600"/><path d="M11 3v10l5 5M11 13l-4 4" stroke="#bfc5cc" stroke-width="2.500" fill="none"/><circle cx="5" cy="19" r="2.600" fill="none" stroke="#1787d4" stroke-width="2"/><circle cx="14" cy="20.500" r="2.500" fill="none" stroke="#1787d4" stroke-width="2"/></svg></div>
    <div class="app"><svg viewBox="0 0 24 24"><path d="M6 1h18v22H6z" fill="#21a366"/><path d="M15 1h9v6h-9z" fill="#33c481"/><path d="M6 12h9v5H6zM6 17h18v6H6z" fill="#185c37"/><path d="M15 12h9v5h-9z" fill="#107c41"/><path d="M0 6h13v13H0z" fill="#107c41"/><text x="6.500" y="16.500" text-anchor="middle" class="ms">X</text></svg></div>
    <div class="app"><svg viewBox="0 0 24 24"><circle cx="12" cy="12" r="10.500" fill="#e3e7ea" stroke="#aab2ba"/><path d="M2 13q2-8 9-8 6 0 6 5l-2 3q-5-5-13 0z" fill="#6cb33f"/><path d="M22 11q-1 9-7 11-4-1-5-7l3-3q2 6 9-1z" fill="#2a8ec6"/></svg></div>
    <div class="app"><svg viewBox="0 0 24 24"><path fill="#23b558" d="M0 0h24v24H0z"/><path d="M3.500 3.500h17v17h-17z" fill="#35c168" stroke="#fff" stroke-width="1.800"/><path d="M8.500 7.500l8.500 4.500-8.500 4.500z" fill="#fff"/></svg></div>
  </div>
  <div class="weather"><svg width="20" height="22" viewBox="0 0 20 22"><circle cx="10" cy="6" r="5" fill="#b8dcf5"/><path d="M1 13q0-4 4-4 2-4 6-3 4 0 4 4 4 0 4 3 0 2-3 2H4q-3 0-3-2z" fill="#c4e0f5" stroke="#a9cfea"/><path d="M7 12q-4 5 0 6 4-1 0-6zM14 14q-4 5 0 6 4-1 0-6z" fill="#3da4e8"/></svg><span>30°C</span><span>Rain</span></div>
  <div class="tray">
    <svg viewBox="0 0 16 16"><path d="M2 11l6-6 6 6" fill="none" stroke="#000" stroke-width="1.200"/></svg>
    <svg viewBox="0 0 16 16"><path d="M2 8q0-3 4-3 2-3 6-1 2 2 2 3 2 1 2 4 0 2-2 2H3q-3 0-3-3 0-2 2-2z" fill="#0a74d1"/><path d="M3 13l7-5q3-1 4-1 2 1 2 4 0 2-2 2z" fill="#2ba8ee"/></svg>
    <svg viewBox="0 0 16 16"><path d="M.8 4.200h13v7.600H.8zM14 6.500h1.500v3H14" fill="none" stroke="#000" stroke-width="1.300"/><path d="M2 6h3v4H2z"/></svg>
    <svg viewBox="0 0 16 16"><path d="M2 13Q3 4 14 2.500M5 13.500Q6 7 14 5.500M8 13.500q1-4.500 6-5M11 14q0-3 3-3" fill="none" stroke="#111" stroke-width="1.300"/><circle cx="13" cy="13.500" r="1.300"/></svg>
    <svg viewBox="0 0 18 16"><use href="#vol"/></svg>
  </div>
  <div class="clock">10:13 PM<br>6/20/2022</div>
  <div class="note"><svg width="18" height="18"><use href="#note"/><path d="M4 4.500h10M4 7h10M4 9.500h7" stroke="#fff"/></svg><b>9</b></div>
</footer>
</body>
</html>
```
FILE: styles.css
```css
* { box-sizing: border-box; }
body { margin: 0; width: 1920px; height: 1080px; overflow: hidden; display: flex; flex-direction: column; background: #1e2330; color: #111; font: 11.5px/16px "Open Sans", "Noto Sans", sans-serif; white-space: nowrap; }
svg { display: block; flex: none; }
.paints { position: absolute; }
.sprite { display: none; }
.logo-text { font: 700 10.5px "Liberation Sans", sans-serif; }
.red { fill: #fa4616; }
.blue { fill: #0067df; }
.white { fill: #fff; }
.logo-s { font: 700 8px "Liberation Sans", sans-serif; fill: #fff; }
.cmd-text { font: 700 6px "Liberation Mono", monospace; fill: #fff; }
.ms { font: 700 10px "Open Sans", sans-serif; fill: #fff; }

.tabstrip { height: 32px; display: flex; align-items: center; background: #cdcdcd; flex: none; }
.tab-menu { width: 47px; padding-left: 16px; }
.tab { width: 239px; height: 32px; padding: 0 11px 0 11px; display: flex; align-items: center; position: relative; }
.tab + .tab::after { content: ""; position: absolute; right: 0; top: 6px; height: 20px; width: 1px; background: #808080; }
.tab-active { background: #f7f7f7; border-radius: 6px 6px 0 0; width: 240px; }
.tab .fav { width: 16px; height: 16px; margin-right: 10px; }
.tab span { flex: 1; overflow: hidden; letter-spacing: -.1px; }
.tab-active span, .tab.fade span { -webkit-mask-image: linear-gradient(90deg, #000 88%, transparent); mask-image: linear-gradient(90deg, #000 88%, transparent); }
.tab .close { width: 10px; height: 10px; margin-left: 8px; }
.plus { width: 15px; height: 15px; margin-left: 10px; }
.winctl { margin-left: auto; display: flex; gap: 34px; padding-right: 17px; }
.winctl svg { width: 12px; height: 12px; }

.navbar { height: 38px; flex: none; display: flex; align-items: center; background: #f7f7f7; padding-left: 20px; }
.nav { width: 16px; height: 16px; margin-right: 28px; }
.address { width: 1372px; margin-left: -8px; height: 30px; background: #fff; border-radius: 5px; display: flex; align-items: center; padding: 0 15px 0 19px; }
.lock { width: 14px; height: 16px; }
.url { margin-left: 16px; font-size: 13.5px; letter-spacing: -.17px; flex: 1; }
.url i { font-style: normal; color: #757575; }
.read { width: 18px; height: 16px; margin-right: 18px; }
.star { width: 16px; height: 16px; }
.ext { display: flex; gap: 28px; margin-left: 20px; padding-right: 15px; border-right: 1px solid #b8b8b8; }
.ext svg { width: 16px; height: 16px; }
.ext2 { gap: 26px; margin-left: 16px; border: 0; padding-right: 17px; }
.ext2 svg { width: 18px; height: 17px; }
.profile { width: 115px; height: 30px; border: 1px solid #222; border-radius: 15px; display: flex; align-items: center; justify-content: space-between; padding: 0 4px 0 14px; }
.profile svg { width: 22px; height: 22px; }
.dots { width: 14px; height: 4px; margin-left: 19px; }

.bookmarks { height: 33px; flex: none; background: #f7f7f7; border-bottom: 1px solid #bdbdbd; display: grid; grid-template-columns: 151px 107px 74px 81px 92px 91px 141px 106px 154px 67px 132px 148px 146px 128px 258px 8px; align-items: center; padding: 0 0 4px 14px; letter-spacing: -.08px; }
.bookmarks a { display: flex; align-items: center; gap: 8px; }
.bookmarks a svg { width: 16px; height: 16px; }
.more { width: 8px; height: 12px; }

.session { height: 36px; flex: none; background: #ff5500; color: #fff; display: flex; align-items: center; font-size: 14px; }
.cell { width: 48px; height: 36px; border-right: 1px solid #ffa77c; display: flex; align-items: center; justify-content: center; }
.current { width: 371px; margin-left: 14px; letter-spacing: .14px; }
.count { border-left: 1px dotted #ffc0a0; padding-left: 14px; letter-spacing: .1px; }
.desk { margin-left: auto; width: 233px; height: 36px; border-left: 1px solid #ffc3a5; padding-left: 6px; display: flex; align-items: center; gap: 4px; font-size: 12.3px; }
.logout { width: 87px; height: 36px; border-left: 1px solid #ffc3a5; padding-left: 11px; display: flex; align-items: center; gap: 6px; font-size: 12px; }

.tools { height: 48px; flex: none; border-bottom: 1px solid #6b7387; display: flex; align-items: center; color: #9ba2b1; }
.mode { width: 214px; height: 36px; border-right: 1px solid #6b7387; padding-left: 33px; display: flex; align-items: center; gap: 9px; color: #fff; font-size: 14px; letter-spacing: .2px; }
.group { display: flex; margin-left: 26px; }
.group .t { width: 36px; height: 28px; margin-right: 12px; }
.block text { font: 700 8.5px "Liberation Serif", serif; fill: #9ba2b1; text-anchor: middle; }
.group.right { margin-left: auto; }
.people { width: 150px; height: 36px; border-right: 1px solid #6b7387; border-left: 1px solid #6b7387; margin-left: 14px; padding-left: 25px; gap: 10px; display: flex; align-items: center; }
.people svg { width: 26px; height: 26px; }
.chat-btn { width: 77px; height: 36px; border-right: 1px solid #6b7387; display: flex; align-items: center; justify-content: center; }
.end-btn { width: 76px; padding-left: 27px; }

.work { height: 853px; flex: none; display: flex; }
.stage { width: 1599px; padding: 41px 0 0 288px; }
.remote { width: 1024px; height: 772px; background: #000; color: #fff; position: relative; display: flex; flex-direction: column; justify-content: flex-end; }
.mark { position: absolute; left: 902px; top: 58px; }
.icon { position: absolute; width: 78px; display: flex; flex-direction: column; align-items: center; text-align: center; line-height: 15px; }
.icon svg { width: 48px; height: 48px; }
.icon span { margin-top: 3px; letter-spacing: 0; }
.c1 { left: 0; }
.c2 { left: 78px; }
.c3 { left: 156px; }
.c4 { left: 312px; }
.r1 { top: 7px; }
.r2 { top: 106px; }
.r3 { top: 205px; }
.r4 { top: 304px; }
.r5 { top: 403px; }
.r6 { top: 502px; }
.r7 { top: 601px; }
.caltex { font: 700 7px "Liberation Sans", sans-serif; fill: #111; }
.rbar { height: 48px; display: flex; align-items: center; }
.rb { width: 49px; height: 48px; display: flex; align-items: center; justify-content: center; position: relative; left: 0; }
.rb:first-child { width: 48px; }
.rb svg { max-width: 24px; max-height: 24px; }
.rb:nth-child(2) { margin-left: 1px; }
.rb.on::after { content: ""; position: absolute; left: 5px; right: 4px; bottom: 4px; height: 2px; background: #76b9ed; }
.rtray { margin-left: auto; height: 40px; display: flex; align-items: center; gap: 15px; border-right: 1px solid #77776a; margin-right: 4px; }
.rtray > svg:nth-child(2) { margin-left: 1px; }
.rclock { width: 66px; text-align: center; line-height: 18px; margin-left: -3px; letter-spacing: -.1px; }
.rnote, .note { position: relative; }
.rnote { width: 37px; margin-left: 2px; }
.rnote b, .note b { position: absolute; left: 8px; top: 7px; width: 17px; height: 17px; line-height: 14px; border-radius: 50%; text-align: center; border: 1px solid #8f8f80; background: #26240a; color: #fff; font-weight: 600; font-size: 11px; }

.chat { width: 321px; border-left: 4px solid #6e768a; display: flex; flex-direction: column; margin-top: -1px; height: 854px; }
.chat-head { height: 45px; background: #6e768a; display: flex; align-items: center; justify-content: space-between; padding: 0 24px 0 18px; color: #fff; font: 600 20px "Inter", sans-serif; letter-spacing: .3px; flex: none; }
.chat-log { height: 600px; flex: none; display: flex; justify-content: space-between; padding-left: 22px; }
.msgs { width: 263px; padding-top: 14px; display: flex; flex-direction: column; gap: 12px; }
.msgs p { margin: 0; padding: 6px; background: #373a45; border-radius: 3px; color: #b2bac8; font: 12px/14px "Liberation Sans", Arial, sans-serif; }
.scroll { width: 10px; background: #50535e; }
.compose { flex: 1; margin: 0 16px 0 17px; border-top: 1px solid #6e768a; display: flex; flex-direction: column; align-items: center; }
.input { width: 280px; height: 103px; margin-top: 18px; background: #373a45; border: 1px solid #2c3039; border-right: 10px solid #656872; padding: 13px 14px; border-radius: 2px; color: #1c2029; font-size: 12.2px; }
.send { margin-top: 23px; width: 88px; height: 38px; background: #434a58; border: 1px solid #6e768a; border-radius: 2px; color: #6e768a; font: 14px "Open Sans", sans-serif; padding: 0 0 2px; }

.preview { position: absolute; left: 642px; top: 854px; width: 431px; height: 186px; background: #c4c5c7; border: 1px solid #333; border-bottom: 0; display: flex; gap: 17px; padding: 8px 0 0 8px; color: #111; }
.pv { width: 198px; }
.pv-title { display: flex; align-items: center; gap: 8px; height: 16px; margin-bottom: 8px; letter-spacing: -.1px; }
.pv-title svg { width: 16px; height: 16px; }
.thumb { width: 198px; height: 108px; }
.pv-logo { font: 5.500px "Open Sans", sans-serif; fill: #8a8a8a; }
.pv-btns { display: flex; justify-content: center; margin-top: 8px; }
.pv-btns i { width: 26px; height: 27px; border: 1px solid #8d8d8f; display: flex; align-items: center; justify-content: center; }
.pv-btns i + i { border-left: 0; }
.pv-btns svg { height: 16px; }

.taskbar { height: 40px; flex: none; background: linear-gradient(90deg, #cfe5ec, #d0e3ec 60%, #d3dceb 80%, #d5dae8); display: flex; align-items: center; position: relative; }
.start { width: 48px; padding-left: 16px; }
.search { width: 344px; height: 40px; background: #fff; border: 1px solid #c3c8ca; display: flex; align-items: center; padding-left: 11px; gap: 11px; font-size: 14px; color: #222; letter-spacing: -.05px; }
.sys { width: 48px; display: flex; justify-content: center; }
.apps { display: flex; margin-left: 2px; }
.app { width: 49px; height: 40px; display: flex; align-items: center; justify-content: center; position: relative; padding-bottom: 1px; }
.app svg { max-width: 24px; max-height: 24px; }
.app::after { content: ""; position: absolute; left: 4px; right: 5px; bottom: 0; height: 2px; background: #0078d4; }
.app.active { background: #edf5f9; }
.app.active::after { left: 0; right: 0; }
.app.split::after { background: linear-gradient(90deg, #0078d4 80%, #5ba9e3 80%); }
.app.last { background: linear-gradient(90deg, #e3eff5 44px, #a9bec7 44px 45px, #d4e6ee 45px); }
.weather { display: flex; align-items: center; margin-left: 403px; font-size: 14px; gap: 10px; letter-spacing: -.4px; width: 108px; }
.tray { display: flex; align-items: center; gap: 8px; }
.tray svg { width: 16px; height: 16px; }
.clock { width: 62px; text-align: center; line-height: 18px; margin-left: 5px; }
.note { margin-left: 12px; width: 37px; height: 22px; }
.note b { background: #c9cdd2; border-color: #777; color: #111; top: 9px; }
```
